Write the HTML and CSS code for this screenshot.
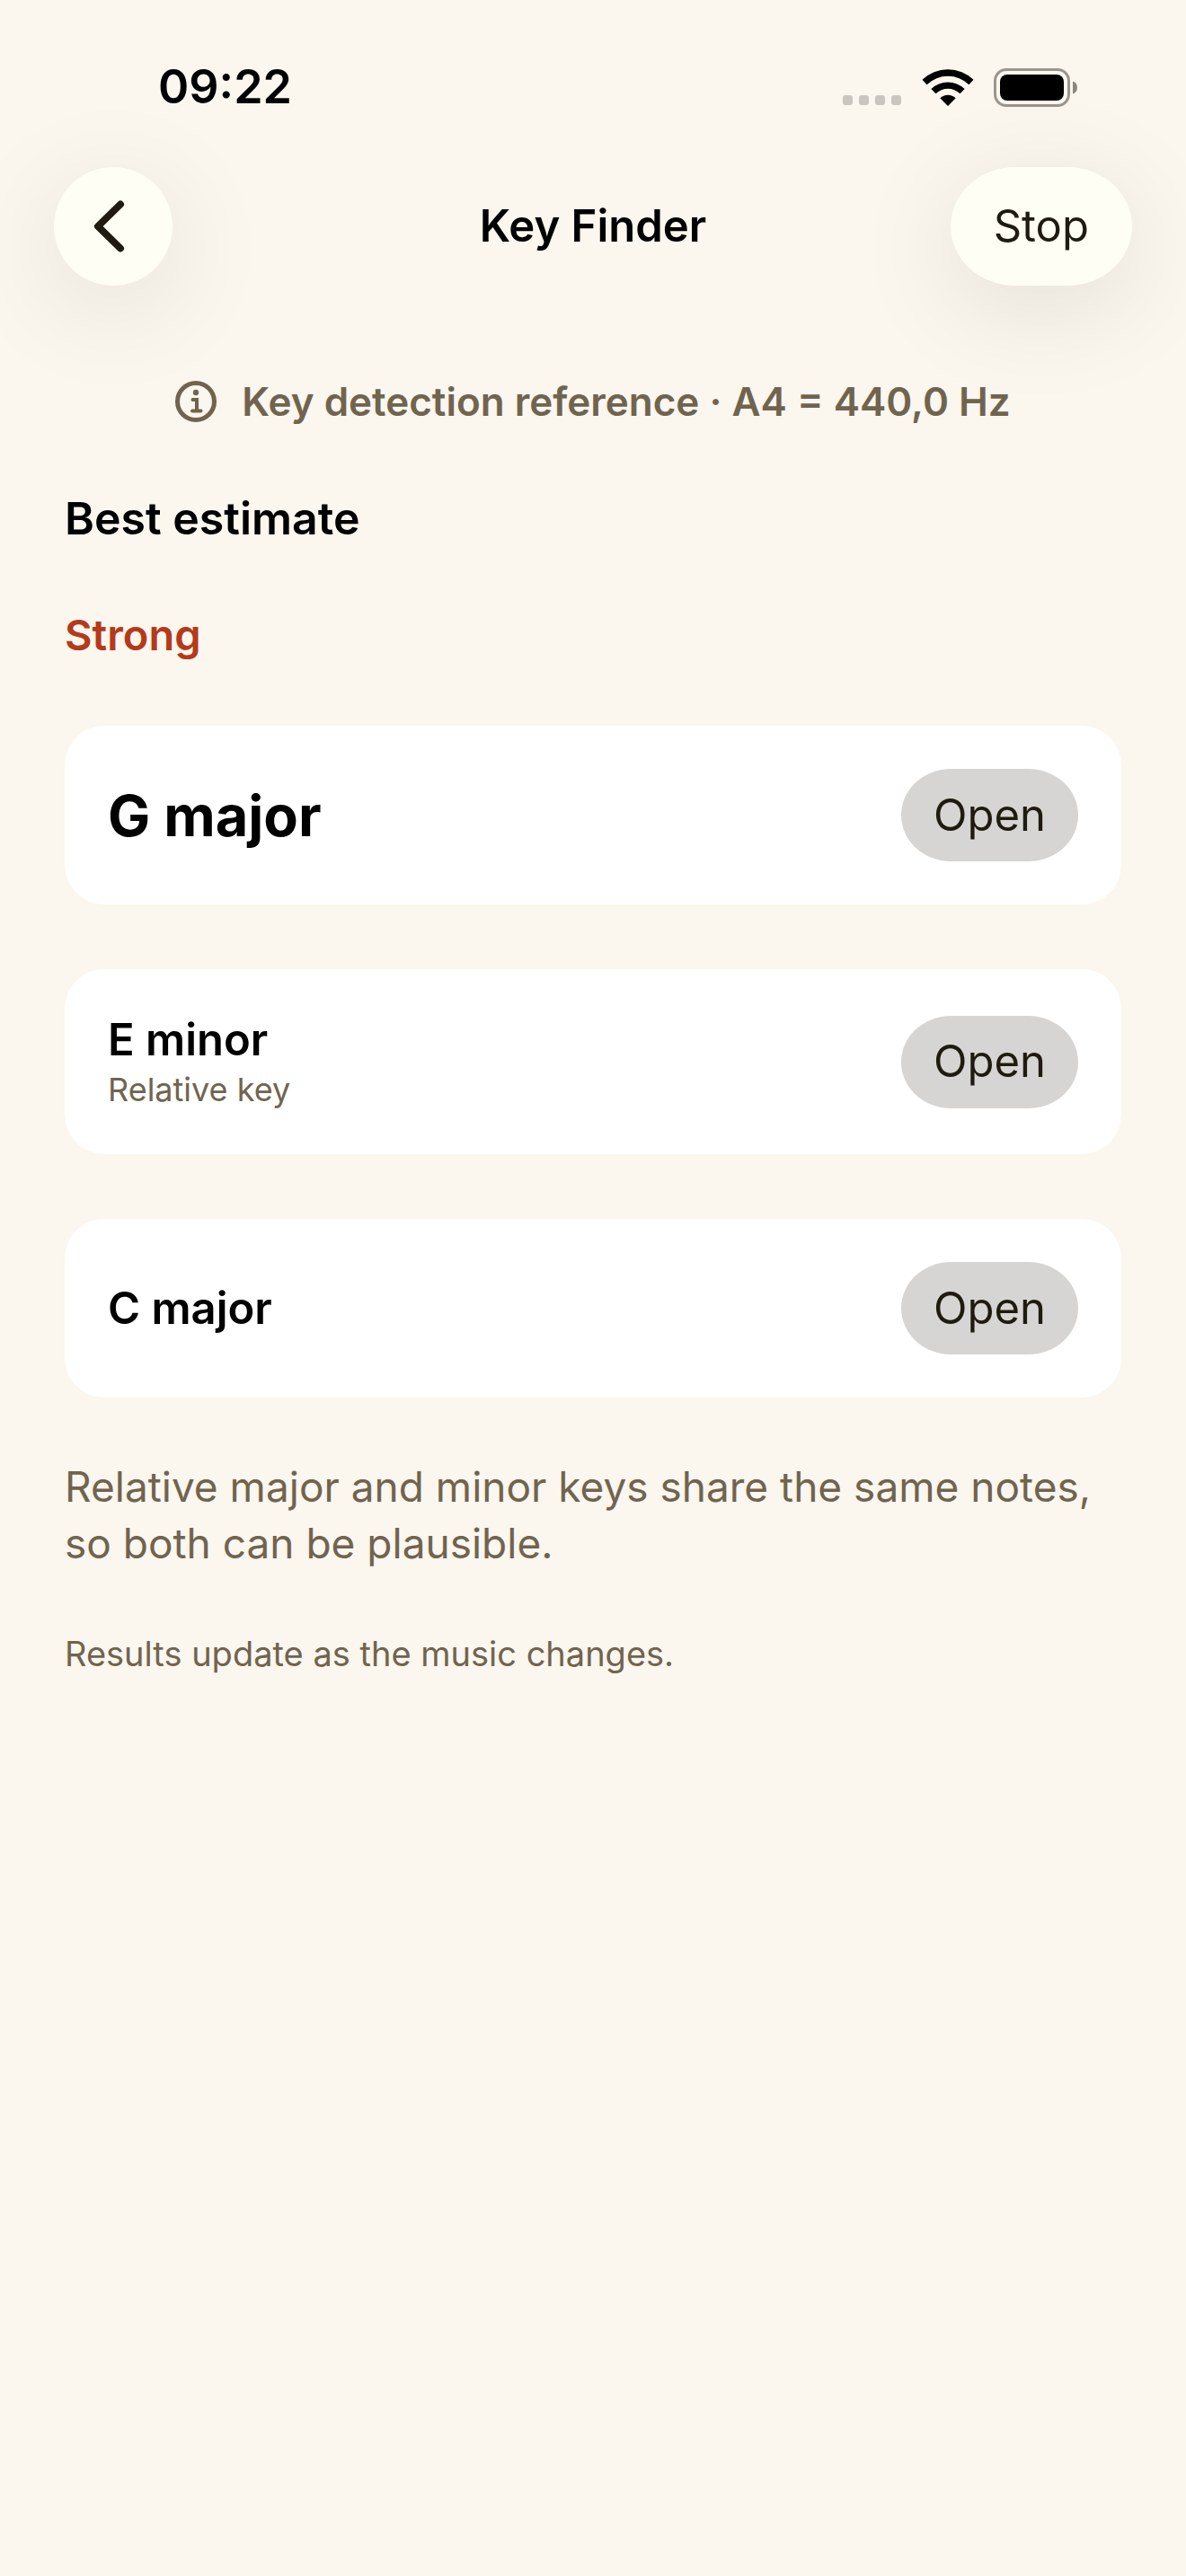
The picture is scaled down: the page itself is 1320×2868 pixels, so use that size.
FILE: index.html
```html
<!DOCTYPE html>
<html lang="en">
<head>
    <meta charset="UTF-8">
    <meta name="viewport" content="width=device-width, initial-scale=1.0">
    <title>Key Finder</title>
    <link rel="stylesheet" href="styles.css">
</head>
<body>
    <div class="status-bar">
        <time class="clock">09:22</time>
        <div class="status-icons">
            <svg class="cellular" viewBox="0 0 66 13" aria-hidden="true">
                <rect x="0" y="0" width="11" height="11" rx="3"/>
                <rect x="18" y="0" width="11" height="11" rx="3"/>
                <rect x="36" y="0" width="11" height="11" rx="3"/>
                <rect x="54" y="0" width="11" height="11" rx="3"/>
            </svg>
            <svg class="wifi" viewBox="0 0 58 43" aria-hidden="true">
                <path d="M0.5 12.8 A41 41 0 0 1 57.5 12.8 L52.4 18.2 A33.5 33.5 0 0 0 5.6 18.2 Z"/>
                <path d="M10.4 23 A27 27 0 0 1 47.6 23 L42.5 28.3 A19.5 19.5 0 0 0 15.5 28.3 Z"/>
                <path d="M20.3 33.2 A12.5 12.5 0 0 1 37.7 33.2 L29 42 Z"/>
            </svg>
            <svg class="battery" viewBox="0 0 94 43" aria-hidden="true">
                <rect class="battery-shell" x="1.5" y="1.5" width="82" height="40" rx="12.5"/>
                <rect x="7" y="7" width="71" height="29" rx="8"/>
                <path class="battery-cap" d="M88 14.5 C91 15.5 93 18 93 21.5 C93 25 91 27.5 88 28.5 Z"/>
            </svg>
        </div>
    </div>

    <header class="nav-bar">
        <button type="button" class="nav-button back" aria-label="Back">
            <svg viewBox="0 0 36 60" aria-hidden="true">
                <path d="M30 5.5 L5 30 L30 54.5"/>
            </svg>
        </button>
        <h1>Key Finder</h1>
        <button type="button" class="nav-button stop">Stop</button>
    </header>

    <main class="content">
        <p class="reference">
            <svg viewBox="0 0 46 46" aria-hidden="true">
                <circle class="ring" cx="23" cy="23" r="20.5"/>
                <circle cx="23" cy="13" r="3.2"/>
                <path d="M19.5 21 H24 V33.5 M19 33.5 H28.5"/>
            </svg>
            <span>Key detection reference · A4 = 440,0 Hz</span>
        </p>

        <h2>Best estimate</h2>
        <p class="confidence">Strong</p>

        <section class="card best">
            <h3>G major</h3>
            <button type="button" class="open">Open</button>
        </section>

        <section class="card relative">
            <div>
                <h3>E minor</h3>
                <p>Relative key</p>
            </div>
            <button type="button" class="open">Open</button>
        </section>

        <section class="card">
            <h3>C major</h3>
            <button type="button" class="open">Open</button>
        </section>

        <p class="note">Relative major and minor keys share the same notes, so both can be plausible.</p>
        <p class="hint">Results update as the music changes.</p>
    </main>
</body>
</html>
```
FILE: styles.css
```css
* {
    box-sizing: border-box;
}

body {
    margin: 0;
    min-height: 100vh;
    background-color: #fbf6ee;
    color: #000;
    font-family: Inter, "Liberation Sans", sans-serif;
    font-size: 49px;
    line-height: 66px;
}

h1, h2, h3, p {
    margin: 0;
}

h1, h2, h3 {
    font-size: 49px;
    font-weight: 600;
}

h2 {
    font-size: 50px;
}

button {
    border: none;
    color: #201b10;
    font-family: inherit;
    font-size: 49px;
    line-height: 66px;
    cursor: pointer;
}

.status-bar {
    display: flex;
    align-items: center;
    justify-content: space-between;
    padding: 64px 120px 0 176px;
}

.clock {
    font-size: 52px;
    font-weight: 600;
}

.status-icons {
    display: flex;
    align-items: flex-end;
}

.cellular {
    width: 66px;
    height: 13px;
    margin-right: 22px;
    fill: #cac6bf;
}

.wifi {
    width: 58px;
    height: 43px;
    margin-right: 22px;
}

.battery {
    width: 94px;
    height: 43px;
}

.battery-shell {
    fill: none;
    stroke: #9a968f;
    stroke-width: 3;
}

.battery-cap {
    fill: #8b8780;
}

.nav-bar {
    display: grid;
    grid-template-columns: 1fr auto 1fr;
    align-items: center;
    padding: 56px 60px 0;
}

.nav-button {
    height: 132px;
    background-color: #fffef4;
    box-shadow: 0 24px 120px rgba(0, 0, 0, 0.1);
}

.back {
    display: flex;
    align-items: center;
    justify-content: center;
    width: 132px;
    padding: 0 8px 0 0;
    border-radius: 50%;
}

.back svg {
    width: 36px;
    height: 60px;
    fill: none;
    stroke: #201b10;
    stroke-width: 8;
    stroke-linecap: round;
    stroke-linejoin: round;
}

.stop {
    justify-self: end;
    padding: 0 48px;
    border-radius: 72px / 66px;
}

.content {
    padding: 96px 72px 72px;
}

.reference {
    display: flex;
    align-items: center;
    justify-content: center;
    gap: 28px;
    margin-bottom: 64px;
    color: #70644f;
    font-size: 44px;
    font-weight: 600;
}

.reference svg {
    width: 46px;
    height: 46px;
    fill: currentColor;
}

.reference .ring {
    fill: none;
    stroke: currentColor;
    stroke-width: 5;
}

.reference path {
    fill: none;
    stroke: currentColor;
    stroke-width: 4;
    stroke-linecap: round;
}

.confidence {
    margin: 64px 0 68px;
    color: #b43a1b;
    font-size: 47px;
    font-weight: 600;
}

.card {
    display: flex;
    align-items: center;
    justify-content: space-between;
    padding: 48px;
    margin-bottom: 72px;
    border-radius: 44px;
    background-color: #fff;
}

.card h3 {
    line-height: 62px;
}

.best h3 {
    font-size: 63px;
    font-weight: 700;
}

.relative p {
    color: #70644f;
    font-size: 36px;
    line-height: 48px;
}

.open {
    height: 103px;
    padding: 0 36px;
    border-radius: 56px / 52px;
    background-color: #d7d5d3;
}

.card:last-of-type {
    margin-bottom: 68px;
}

.note {
    margin-bottom: 64px;
    color: #70644f;
    font-size: 46px;
    line-height: 63px;
}

.hint {
    color: #70644f;
    font-size: 38px;
    line-height: 54px;
}
```
